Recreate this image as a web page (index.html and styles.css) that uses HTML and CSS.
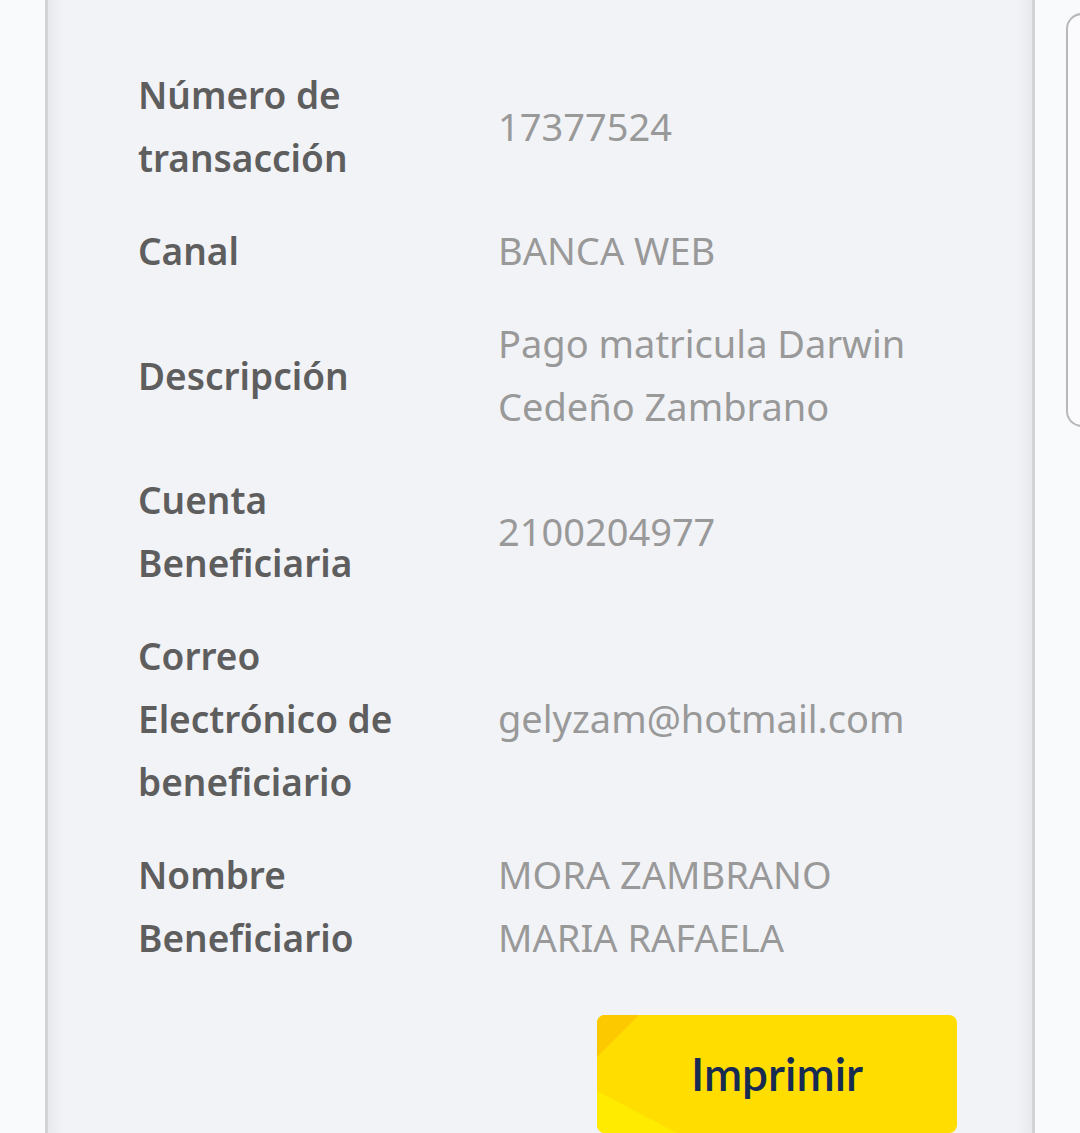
FILE: index.html
```
<!DOCTYPE html>
<html lang="es">
<head>
<meta charset="utf-8">
<link rel="stylesheet" href="styles.css">
</head>
<body>
<div class="page">
  <section class="card">
    <div class="details">
      <div class="label">Número de transacción</div>
      <div class="value">17377524</div>
      <div class="label">Canal</div>
      <div class="value">BANCA WEB</div>
      <div class="label">Descripción</div>
      <div class="value">Pago matricula Darwin Cedeño Zambrano</div>
      <div class="label">Cuenta Beneficiaria</div>
      <div class="value">2100204977</div>
      <div class="label">Correo Electrónico de beneficiario</div>
      <div class="value">gelyzam@hotmail.com</div>
      <div class="label">Nombre Beneficiario</div>
      <div class="value">MORA ZAMBRANO MARIA RAFAELA</div>
    </div>
    <div class="actions">
      <button class="btn-print" type="button">
        <svg class="btn-deco" width="360" height="118" viewBox="0 0 360 118" preserveAspectRatio="none" aria-hidden="true">
          <polygon points="0,0 42,0 0,42" fill="#fcc800"/>
          <polygon points="0,76 80,118 0,118" fill="#ffeb00"/>
        </svg>
        <span class="btn-text">Imprimir</span>
      </button>
    </div>
  </section>
  <aside class="side-panel"></aside>
</div>
</body>
</html>
```
FILE: styles.css
```
html, body {
  margin: 0;
  padding: 0;
  background: #f9fafc;
  overflow: hidden;
}
body {
  width: 1080px;
  height: 1133px;
  font-family: "Noto Sans", "Open Sans", sans-serif;
}
.page {
  display: flex;
  align-items: flex-start;
  padding-left: 45px;
  gap: 31px;
}
.card {
  flex: 0 0 990px;
  box-sizing: border-box;
  height: 1133px;
  background: #f2f3f7;
  border-left: 3px solid #d3d3d6;
  border-right: 3px solid #d3d3d6;
  box-shadow: inset 16px 0 14px -10px rgba(0,0,0,0.05), inset -16px 0 14px -10px rgba(0,0,0,0.05);
  padding: 63px 75px 0 90px;
}
.details {
  display: grid;
  grid-template-columns: 300px 1fr;
  column-gap: 60px;
  row-gap: 30px;
  align-items: center;
  font-size: 38px;
  line-height: 63px;
}
.label {
  color: #5e5e5e;
  font-weight: 600;
  font-size: 37px;
}
.value {
  color: #999999;
  font-weight: 400;
}
.actions {
  display: flex;
  justify-content: flex-end;
  margin-top: 46px;
}
.btn-print {
  position: relative;
  width: 360px;
  height: 118px;
  border: none;
  border-radius: 8px;
  background: #ffdd00;
  overflow: hidden;
  padding: 0;
  cursor: pointer;
  display: flex;
  align-items: center;
  justify-content: center;
}
.btn-deco {
  position: absolute;
  left: 0;
  top: 0;
}
.btn-text {
  position: relative;
  font-family: "Lato", "Noto Sans", sans-serif;
  font-size: 46px;
  font-weight: 600;
  color: #172b52;
  margin-top: -2px;
}
.side-panel {
  flex: 0 0 60px;
  margin-top: 13px;
  height: 414px;
  box-sizing: border-box;
  border: 2px solid #b8b8ba;
  border-right: none;
  border-radius: 16px 0 0 16px;
  background: #fbfbfd;
}
```
